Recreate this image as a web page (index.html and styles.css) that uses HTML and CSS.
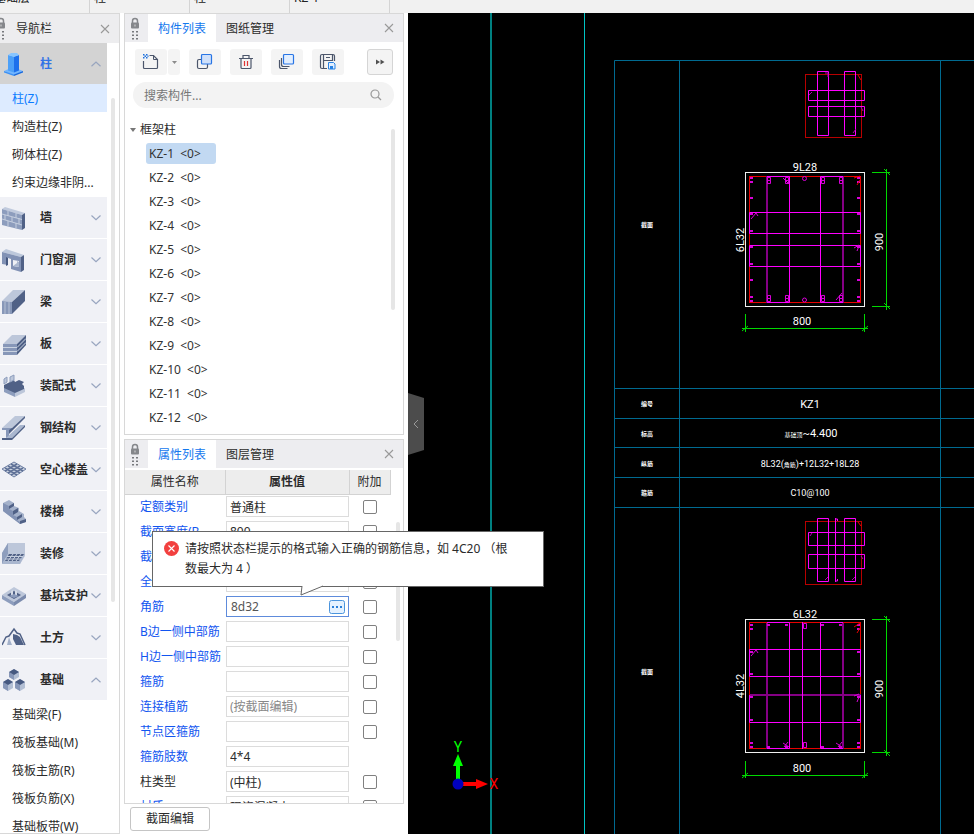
FILE: index.html
```html
<!DOCTYPE html>
<html lang="zh-CN">
<head>
<meta charset="utf-8">
<title>构件建模</title>
<link rel="stylesheet" href="styles.css">
</head>
<body>
<svg class="defs" aria-hidden="true">
  <symbol id="lock" viewBox="0 0 10 23">
    <path d="M2.5 6V4a2.5 2.5 0 0 1 5 0v2" fill="none" stroke="#85878b" stroke-width="1.5"/>
    <rect x="1" y="5.500" width="8" height="6" rx="1" fill="#85878b"/>
    <path d="M5 7.500v2" stroke="#d8d8da"/>
    <path d="M2 14h2v1.500h-2zM6 14h2v1.500h-2zM2 17.500h2v1.500h-2zM6 17.500h2v1.500h-2zM2 21h2v1.500h-2zM6 21h2v1.500h-2z" fill="#77797d"/>
  </symbol>
  <symbol id="close" viewBox="0 0 10 10"><path d="M1 1l8 8M9 1l-8 8" stroke="#999" stroke-width="1.100"/></symbol>
  <symbol id="down" viewBox="0 0 10 6"><path d="M.5 .5l4.500 4.200l4.500-4.200" fill="none" stroke="#98a5bf" stroke-width="1.200"/></symbol>
  <symbol id="up" viewBox="0 0 10 6"><path d="M.5 5.200l4.500-4.200l4.500 4.200" fill="none" stroke="#98a5bf" stroke-width="1.200"/></symbol>
</svg>

<div class="app">
  <div class="context-bar">
    <span>基础层</span><span>柱</span><span>柱</span><span>KZ-1</span>
  </div>

  <div class="workspace">
    <nav class="nav" aria-label="导航栏">
      <header class="nav-head">
        <svg class="lock"><use href="#lock"/></svg>
        <h2>导航栏</h2>
        <button class="close" aria-label="关闭导航栏"><svg><use href="#close"/></svg></button>
      </header>
      <div class="nav-body">
        <div class="nav-list">
          <section>
            <button class="group open">
              <svg class="ico" viewBox="0 0 24 24"><path d="M2 19l9-4 10 4-9 4z" fill="#72b6ff"/><path d="M2 19v1.500l10 3.500v-1.500z" fill="#3b91f5"/><path d="M21 19v1.500l-9 3.500v-1.500z" fill="#1769df"/><path d="M6 3l6 1.500v16l-6-2z" fill="#4ca0f8"/><path d="M12 4.500l5-1.500v15.500l-5 2z" fill="#1d70ec"/><path d="M6 3l3-2h6l2 2-5 2z" fill="#88c6ff"/></svg>
              <span>柱</span><svg class="arrow"><use href="#up"/></svg>
            </button>
            <a class="sub current" href="#">柱(Z)</a>
            <a class="sub" href="#">构造柱(Z)</a>
            <a class="sub" href="#">砌体柱(Z)</a>
            <a class="sub" href="#">约束边缘非阴...</a>
          </section>
          <section><button class="group">
            <svg class="ico" viewBox="0 0 24 24"><path d="M0 3l3-2 20 6-3 2z" fill="#c0cadd"/><path d="M0 3l20 6v15l-20-5z" fill="#8d9dbd"/><path d="M20 9l3-2v15l-3 2z" fill="#506186"/><path d="M0 8l20 5.500M0 13l20 6M6 5v5M14 7v5M3 9v5M10 11v5M17 12v6M6 15v5M14 17v5" stroke="#c6cfdf"/></svg>
            <span>墙</span><svg class="arrow"><use href="#down"/></svg></button></section>
          <section><button class="group">
            <svg class="ico" viewBox="0 0 24 24"><path d="M0 4l4-3 18 6-3 2z" fill="#bdc8db"/><path d="M0 4l19 5v15l-10-3v-10l-3-1v7l-6-1z" fill="#8292b5"/><path d="M19 9l3-2v15l-3 2z" fill="#506186"/><path d="M11 12l6 1v6l-6-1z" fill="#eef0f5"/><path d="M11 18l4-3v-2l2 1v5z" fill="#aab7cf"/><path d="M4 9v9l2-1v-7z" fill="#475980"/></svg>
            <span>门窗洞</span><svg class="arrow"><use href="#down"/></svg></button></section>
          <section><button class="group">
            <svg class="ico" viewBox="0 0 24 24"><path d="M0 11l11-11h12l-13 12z" fill="#bdc7da"/><path d="M0 11l10 1v12h-10z" fill="#8797b8"/><path d="M3 12v12M7 12v12" stroke="#b6c1d5"/><path d="M10 12l13-12v11l-13 13z" fill="#506186"/></svg>
            <span>梁</span><svg class="arrow"><use href="#down"/></svg></button></section>
          <section><button class="group">
            <svg class="ico" viewBox="0 0 24 24"><path d="M1 12l9-9h14l-9 9z" fill="#bdc7da"/><path d="M1 12h14v11h-14z" fill="#8797b8"/><path d="M15 12l9-9v10l-9 10z" fill="#4c5e84"/><path d="M1 15.500h14l9-9M1 19.500h14l9-9" fill="none" stroke="#cad3e1"/></svg>
            <span>板</span><svg class="arrow"><use href="#down"/></svg></button></section>
          <section><button class="group">
            <svg class="ico" viewBox="0 0 24 24"><path d="M2 13l11 5v5l-11-5z" fill="#8d9dbd"/><path d="M13 18l10-4v4l-10 5z" fill="#bdc7da"/><path d="M2 11l10-5 1 2 4-2 5 2-2 2 2 2v3l-9 4-11-5z" fill="#506186"/><path d="M2 5l3-2v5l-3 2zM8 3l4-2v5l-4 2z" fill="#bdc7da" stroke="#8d9dbd"/></svg>
            <span>装配式</span><svg class="arrow"><use href="#down"/></svg></button></section>
          <section><button class="group">
            <svg class="ico" viewBox="0 0 24 24"><path d="M0 12l13-12h10l-13 12z" fill="#bdc7da"/><path d="M0 12h10v2h-3v7l-3 1v-8h-4z" fill="#8797b8"/><path d="M10 12l13-12v2l-16 16v-4z" fill="#506186"/><path d="M0 22h4l14-13h5l-13 13z" fill="#aab7cf"/><path d="M0 22h10l13-13v2l-13 13h-10z" fill="#506186"/></svg>
            <span>钢结构</span><svg class="arrow"><use href="#down"/></svg></button></section>
          <section><button class="group">
            <svg class="ico" viewBox="0 0 24 24"><path d="M0 11l12-7 12 7-12 8z" fill="#cbd3e1" stroke="#6e7fa3"/><path d="M3 13l12-7M6 15l12-7M9 17l12-7M9 6l12 7M6 8l12 7M3 10l12 7" stroke="#5e7096" stroke-width="1.500"/></svg>
            <span>空心楼盖</span><svg class="arrow"><use href="#down"/></svg></button></section>
          <section><button class="group">
            <svg class="ico" viewBox="0 0 24 24"><path d="M1 3l6-3 5 3v3l5 2v3l5 3v3l2 2v3l-6 2-17-13z" fill="#a4b1ca"/><path d="M1 3l6 3v3l4 2v4l4 2v3l3 2v2l-17-13z" fill="#8292b4"/><path d="M7 6l5-3v3l-5 3zM11 11l5-3v4l-5 3zM15 17l5-3v3l-5 3zM18 21l6-2v3l-6 2z" fill="#506186"/></svg>
            <span>楼梯</span><svg class="arrow"><use href="#down"/></svg></button></section>
          <section><button class="group">
            <svg class="ico" viewBox="0 0 24 24"><path d="M6 1h17v13l-5 8h-18v-11z" fill="#bdc7da"/><path d="M6 1l-6 10v11l6-10z" fill="#8e9ebd"/><path d="M6 12h17l-5 10h-18z" fill="#aab7cf"/><path d="M7 12h15l-5 7h-14z" fill="#506186"/><path d="M5 14.500h16M3 17h16M11 12l-5 7M15 12l-5 7M19 12l-5 7" stroke="#c4cddd"/></svg>
            <span>装修</span><svg class="arrow"><use href="#down"/></svg></button></section>
          <section><button class="group">
            <svg class="ico" viewBox="0 0 24 24"><path d="M0 11l12-8 12 7-12 8z" fill="#bdc7da"/><path d="M0 11l12 7v4l-12-7z" fill="#8d9dbd"/><path d="M24 10v4l-12 8v-4z" fill="#7b8bad"/><path d="M5 11l7-4 7 4-7 4z" fill="#506186"/><path d="M9 7l2-1v6l-2-1zM13 6l2 1v5l-2-1z" fill="#d6dce7"/><path d="M7 12l5-2 5 2-5 2z" fill="#8d9dbd"/></svg>
            <span>基坑支护</span><svg class="arrow"><use href="#down"/></svg></button></section>
          <section><button class="group">
            <svg class="ico" viewBox="0 0 24 24"><path d="M0 19l4-8 3-1 5-7 3 4 3 1 5 11" fill="none" stroke="#506186" stroke-width="1.500"/><path d="M11 8l4 1 3 2 4 8h-8l-3-6z" fill="#506186"/><path d="M7 11l-2 8h5l-2-5z" fill="#a3b1ca"/></svg>
            <span>土方</span><svg class="arrow"><use href="#down"/></svg></button></section>
          <section>
            <button class="group">
              <svg class="ico" viewBox="0 0 24 24"><path d="M7 4l5-3 5 3v5l-5 3-5-3zM1 14l5-3 5 3v6l-5 3-5-3zM13 14l5-3 5 3v6l-5 3-5-3z" fill="#b3bfd4"/><path d="M7 4l5 3v5l-5-3zM1 14l5 3v6l-5-3zM13 14l5 3v6l-5-3z" fill="#8797b8"/><path d="M7 4l5-3 5 3-5 3zM1 14l5-3 5 3-5 3zM13 14l5-3 5 3-5 3z" fill="#465980"/></svg>
              <span>基础</span><svg class="arrow"><use href="#up"/></svg>
            </button>
            <a class="sub" href="#">基础梁(F)</a>
            <a class="sub" href="#">筏板基础(M)</a>
            <a class="sub" href="#">筏板主筋(R)</a>
            <a class="sub" href="#">筏板负筋(X)</a>
            <a class="sub" href="#">基础板带(W)</a>
          </section>
        </div>
        <div class="scroll nav-scroll"></div>
      </div>
    </nav>

    <div class="side">
      <section class="panel components">
        <header class="tabs">
          <svg class="lock"><use href="#lock"/></svg>
          <button class="tab active">构件列表</button>
          <button class="tab">图纸管理</button>
          <button class="close" aria-label="关闭构件列表"><svg><use href="#close"/></svg></button>
        </header>
        <div class="tools">
          <div class="split">
            <button class="tool" aria-label="新建"><svg viewBox="0 0 18 18"><path d="M1.500 8v6.500q0 1 1 1h12q1 0 1-1v-8l-4-4h-4" fill="none" stroke="#4c566b" stroke-width="1.200"/><path d="M11.500 2.500v4h4" fill="none" stroke="#4c566b"/><path d="M1 1h1.500v1.500h-1.500zM4 1h1.500v1.500h-1.500zM2.500 2.500h1.500v1.500h-1.500zM5.500 2.500h1v1.500h-1zM1 4h1.500v1.500h-1.500zM4 4h1.500v1.500h-1.500z" fill="#1d70dd"/></svg></button>
            <button class="drop" aria-label="新建选项"><svg viewBox="0 0 5 3"><path d="M0 0h5l-2.500 3z" fill="#8b8b8b"/></svg></button>
          </div>
          <button class="tool" aria-label="复制"><svg viewBox="0 0 18 18"><rect x="1.500" y="6.500" width="10" height="9" rx="1.500" fill="none" stroke="#4c566b" stroke-width="1.200"/><rect x="5.500" y="1.500" width="10" height="9.500" rx="1" fill="#cfe0fa" stroke="#2875e5" stroke-width="1.200"/></svg></button>
          <button class="tool" aria-label="删除"><svg viewBox="0 0 18 18"><path d="M2 5.500h14M6 5v-2.500h6v2.500M4 5.500v9q0 1 1 1h8q1 0 1-1v-9" fill="none" stroke="#4c566b" stroke-width="1.200"/><path d="M7.500 8v5M10.500 8v5" stroke="#e03434" stroke-width="1.200"/></svg></button>
          <button class="tool" aria-label="层间复制"><svg viewBox="0 0 18 18"><path d="M1.500 7v6.500q0 2 2 2h6M3.500 5v6.500q0 2 2 2h6" fill="none" stroke="#4c566b" stroke-width="1.200"/><rect x="5.500" y="1.500" width="10" height="9.500" rx="1" fill="#e2efff" stroke="#2875e5" stroke-width="1.200"/></svg></button>
          <button class="tool" aria-label="存档"><svg viewBox="0 0 18 18"><path d="M8 15.500h-5q-1.500 0-1.500-1.500v-11q0-1.500 1.500-1.500h11q1.500 0 1.500 1.500v5M4.500 2v13M13.500 2v5.500h-9M7 4.500h4" fill="none" stroke="#4c566b" stroke-width="1.200"/><path d="M9.500 9.500h5l1.500 1.500v5h-6.500z" fill="#e2efff" stroke="#2883e5"/><path d="M11 13h3v3h-3z" fill="#2883e5"/></svg></button>
          <button class="tool more" aria-label="更多"><svg viewBox="0 0 18 18"><path d="M5 6.500l4 2.500-4 2.500zM9.500 6.500l4 2.500-4 2.500z" fill="#505050"/></svg></button>
        </div>
        <label class="search">
          <input type="search" placeholder="搜索构件..." aria-label="搜索构件">
          <svg viewBox="0 0 12 12"><circle cx="5" cy="5" r="4" fill="none" stroke="#999" stroke-width="1.200"/><path d="M8 8l3 3" stroke="#999" stroke-width="1.200"/></svg>
        </label>
        <div class="tree">
          <div class="tree-list">
            <div class="root"><svg viewBox="0 0 6 4"><path d="M0 0h6l-3 4z" fill="#777"/></svg>框架柱</div>
            <ul>
              <li><button class="leaf chosen">KZ-1&nbsp; &lt;0&gt;</button></li>
              <li><button class="leaf">KZ-2&nbsp; &lt;0&gt;</button></li>
              <li><button class="leaf">KZ-3&nbsp; &lt;0&gt;</button></li>
              <li><button class="leaf">KZ-4&nbsp; &lt;0&gt;</button></li>
              <li><button class="leaf">KZ-5&nbsp; &lt;0&gt;</button></li>
              <li><button class="leaf">KZ-6&nbsp; &lt;0&gt;</button></li>
              <li><button class="leaf">KZ-7&nbsp; &lt;0&gt;</button></li>
              <li><button class="leaf">KZ-8&nbsp; &lt;0&gt;</button></li>
              <li><button class="leaf">KZ-9&nbsp; &lt;0&gt;</button></li>
              <li><button class="leaf">KZ-10&nbsp; &lt;0&gt;</button></li>
              <li><button class="leaf">KZ-11&nbsp; &lt;0&gt;</button></li>
              <li><button class="leaf">KZ-12&nbsp; &lt;0&gt;</button></li>
            </ul>
          </div>
          <div class="scroll tree-scroll"></div>
        </div>
      </section>

      <section class="panel props">
        <header class="tabs">
          <svg class="lock"><use href="#lock"/></svg>
          <button class="tab active">属性列表</button>
          <button class="tab">图层管理</button>
          <button class="close" aria-label="关闭属性列表"><svg><use href="#close"/></svg></button>
        </header>
        <div class="props-body">
          <table>
            <colgroup><col class="c-name"><col class="c-value"><col class="c-extra"></colgroup>
            <thead><tr><th>属性名称</th><th class="strong">属性值</th><th>附加</th></tr></thead>
            <tbody>
              <tr><td><label for="p1">定额类别</label></td><td><input id="p1" value="普通柱"></td><td><input type="checkbox" aria-label="附加 定额类别"></td></tr>
              <tr><td><label for="p2">截面宽度(B...</label></td><td><input id="p2" value="800"></td><td><input type="checkbox" aria-label="附加 截面宽度"></td></tr>
              <tr><td><label for="p3">截面高度(H...</label></td><td><input id="p3" value="900"></td><td><input type="checkbox" aria-label="附加 截面高度"></td></tr>
              <tr><td><label for="p4">全部纵筋</label></td><td><input id="p4"></td><td><input type="checkbox" aria-label="附加 全部纵筋"></td></tr>
              <tr><td><label for="p5">角筋</label></td><td><div class="editing"><input id="p5" value="8d32"><button aria-label="选择角筋"><svg viewBox="0 0 16 14"><rect x=".5" y=".5" width="15" height="13" rx="2" fill="#e4f1ff" stroke="#4a94dd"/><path d="M3 6h2v2h-2zM7 6h2v2h-2zM11 6h2v2h-2z" fill="#287ed8"/></svg></button></div></td><td><input type="checkbox" aria-label="附加 角筋"></td></tr>
              <tr><td><label for="p6">B边一侧中部筋</label></td><td><input id="p6"></td><td><input type="checkbox" aria-label="附加 B边一侧中部筋"></td></tr>
              <tr><td><label for="p7">H边一侧中部筋</label></td><td><input id="p7"></td><td><input type="checkbox" aria-label="附加 H边一侧中部筋"></td></tr>
              <tr><td><label for="p8">箍筋</label></td><td><input id="p8"></td><td><input type="checkbox" aria-label="附加 箍筋"></td></tr>
              <tr><td><label for="p9">连接植筋</label></td><td><input id="p9" placeholder="(按截面编辑)"></td><td><input type="checkbox" aria-label="附加 连接植筋"></td></tr>
              <tr><td><label for="p10">节点区箍筋</label></td><td><input id="p10"></td><td><input type="checkbox" aria-label="附加 节点区箍筋"></td></tr>
              <tr><td><label for="p11">箍筋肢数</label></td><td><input id="p11" value="4*4"></td><td></td></tr>
              <tr><td><label class="plain" for="p12">柱类型</label></td><td><input id="p12" value="(中柱)"></td><td><input type="checkbox" aria-label="附加 柱类型"></td></tr>
              <tr><td><label for="p13">材质</label></td><td><input id="p13" value="现浇混凝土"></td><td><input type="checkbox" aria-label="附加 材质"></td></tr>
            </tbody>
          </table>
          <div class="scroll props-scroll"></div>
        </div>
        <div class="tip" role="alert">
          <svg class="tip-icon" viewBox="0 0 15 15"><circle cx="7.500" cy="7.500" r="7.500" fill="#f2403f"/><path d="M4.500 4.500l6 6M10.500 4.500l-6 6" stroke="#fff" stroke-width="1.100"/></svg>
          <p>请按照状态栏提示的格式输入正确的钢筋信息，如 4C20 （根<br>数最大为 4 ）</p>
          <svg class="tip-tail" viewBox="0 0 24 11"><path d="M2 0v1.500l-1 8.500 21-8.500V0z" fill="#fff"/><path d="M2 1l-1 9 22-9" fill="none" stroke="#666"/></svg>
        </div>
      </section>

      <button class="section-edit">截面编辑</button>
    </div>

    <main class="canvas">
      <svg class="drawing" role="img" aria-label="柱配筋图">
        <g transform="translate(-408 -13)" fill="none">
          <path class="axis-wide" d="M491 0V2000"/>
          <path class="axis" d="M584.500 0V2000"/>
          <path class="grid" d="M614.500 2000V60.500H3000M679.500 60V2000M940.500 60V2000M614 388.500H3000M614 418.500H3000M614 447.500H3000M614 477.500H3000M614 507.500H3000"/>

          <!-- upper stirrup diagram -->
          <rect class="red dim" x="805.500" y="74.500" width="56" height="63"/>
          <path class="mag" d="M817.500 71.500h11v64h-11zM844.500 71.500h11v64h-11zM808.500 90.500h56v10h-56zM808.500 106.500h56v10h-56z"/>
          <path class="mag dim" d="M825 73h3v4M809 95l3-3M861 107l2 4M853 133l3-4"/>
          <path class="red" d="M858 75l3 5"/>

          <!-- upper column section -->
          <rect class="white" x="745.500" y="172.500" width="119" height="134"/>
          <rect class="red" x="749.500" y="176.500" width="111" height="126"/>
          <path class="mag thick" d="M767 176V303M843 176V303"/>
          <path class="mag" d="M767 176.500h22.500v126h-22.500M843 176.500h-22.500v126h22.500M749.500 212.500h111v21h-111zM749.500 245.500h111v21h-111z"/>
          <g class="mag bars">
            <path d="M767.500 177.500h3v3h-3zM767.500 180.500h3v3h-3zM785.500 177.500h3v3h-3zM785.500 180.500h3v3h-3zM821.500 177.500h3v3h-3zM821.500 180.500h3v3h-3zM839.500 177.500h3v3h-3zM839.500 180.500h3v3h-3z"/>
            <path d="M767.500 295.500h3v3h-3zM767.500 298.500h3v3h-3zM785.500 295.500h3v3h-3zM785.500 298.500h3v3h-3zM821.500 295.500h3v3h-3zM821.500 298.500h3v3h-3zM839.500 295.500h3v3h-3zM839.500 298.500h3v3h-3z"/>
            <circle cx="804.500" cy="178.500" r="2"/><circle cx="804.500" cy="300" r="2"/>
            <path d="M750 178h3M750 182h3M750 198h3M750 214h3M750 231h3M750 247h3M750 264h3M750 280h3M750 297h3M750 301h3M857 178h3M857 182h3M857 198h3M857 214h3M857 231h3M857 247h3M857 264h3M857 280h3M857 297h3M857 301h3" stroke-width="2"/>
            <path d="M751 219l5-6 2 3M854 248l5-3M857 251l2-5M836 300l6-7M783 178l6 6"/>
          </g>
          <path class="red" d="M854 178l6-2M857 185l3-5"/>

          <!-- upper dimensions -->
          <path class="green" d="M742 328.500H868M745.500 314V332M864.500 314V332M742 331l6-5M862 331l6-5M886.500 169V310M872 172.500h18M872 306.500h18M884 169l6 6M884 303l6 6"/>

          <!-- lower stirrup diagram -->
          <rect class="red dim" x="805.500" y="521.500" width="56" height="63"/>
          <path class="mag" d="M817.500 518.500h11v63h-11zM844.500 518.500h11v63h-11zM835.500 518v64M835.500 519h2v2M835.500 581h2v-2M808.500 532.500h56v13h-56zM808.500 554.500h56v14h-56z"/>
          <path class="mag dim" d="M810 536l2-3M861 556l2 3M825 580l3-3M852 580l3-3"/>
          <path class="red" d="M858 522l3 4"/>

          <!-- lower column section -->
          <rect class="white" x="745.500" y="619.500" width="119" height="133"/>
          <rect class="red" x="749.500" y="622.500" width="111" height="126"/>
          <path class="mag thick" d="M767 623V749M843 623V749M750 695H861"/>
          <path class="mag" d="M767 622.500h22.500v126h-22.500M843 622.500h-22.500v126h22.500M802.500 622V749M749.500 649.500h111v27h-111zM749.500 695v27.500h111V695"/>
          <g class="mag bars">
            <path d="M750 625h3M750 629h3M750 652h3M750 674h3M750 697h3M750 720h3M750 743h3M750 747h3M857 625h3M857 629h3M857 652h3M857 674h3M857 697h3M857 720h3M857 743h3M857 747h3M767 625h3M785 625h3M821 625h3M839 625h3M767 747h3M785 747h3M821 747h3M839 747h3" stroke-width="2"/>
            <path d="M803.500 623.500h3v5h-3zM803.500 742.500h3v5h-3zM751 656l5-6 2 3M854 696l5-2M857 702l2-5M783 743l6 4M836 743l6 4M784 747l4-5M838 747l4-5"/>
          </g>
          <path class="red" d="M854 627l6-4M857 633l3-5"/>

          <!-- lower dimensions -->
          <path class="green" d="M742 775.500H868M745.500 761V778M864.500 761V778M742 778l6-5M862 778l6-5M886.500 616V756M872 619.500h18M872 752.500h18M884 616l6 6M884 750l6 6"/>

          <g class="cad">
            <text x="805" y="171">9L28</text>
            <text x="802" y="325">800</text>
            <text transform="translate(744 240) rotate(-90)">6L32</text>
            <text transform="translate(883 242) rotate(-90)">900</text>
            <text x="805" y="618">6L32</text>
            <text x="802" y="772">800</text>
            <text transform="translate(744 686) rotate(-90)">4L32</text>
            <text transform="translate(883 689) rotate(-90)">900</text>
            <text x="810" y="408">KZ1</text>
            <text x="811" y="437"><tspan class="han">基础顶</tspan>~4.400</text>
            <text class="long" x="810" y="467">8L32(<tspan class="han">角筋</tspan>)+12L32+18L28</text>
            <text class="long" x="810" y="496">C10@100</text>
          </g>
          <g class="cad row-name">
            <text x="647" y="227">截面</text>
            <text x="647" y="406">编号</text>
            <text x="647" y="436">标高</text>
            <text x="647" y="466">纵筋</text>
            <text x="647" y="495">箍筋</text>
            <text x="647" y="674">截面</text>
          </g>

          <!-- coordinate axes -->
          <path d="M458 784V765" stroke="#0f0" stroke-width="4"/><path d="M453 766h10l-5-12z" fill="#0f0"/>
          <path d="M458 784h18" stroke="#f00" stroke-width="4"/><path d="M476 779v10l12-5z" fill="#f00"/>
          <circle cx="458" cy="784" r="5.500" fill="#0000be"/>
          <g class="axis-name"><text x="458" y="752" fill="#0f0">Y</text><text x="494" y="789" fill="#f00">X</text></g>
        </g>
      </svg>
      <button class="handle" aria-label="收起面板"><svg viewBox="0 0 6 10"><path d="M5 1l-4 4 4 4" fill="none" stroke="#999"/></svg></button>
    </main>
  </div>
</div>
</body>
</html>
```
FILE: styles.css
```css
* { box-sizing: border-box; }

body {
  margin: 0;
  font: 12px/16px "Noto Sans", "Noto Sans CJK SC", sans-serif;
  color: #2b2b2b;
  background: #fff;
}

button, input { font: inherit; color: inherit; }
button { margin: 0; padding: 0; border: 0; background: none; }
a { color: inherit; text-decoration: none; }
svg { display: block; flex: none; }
h2, p, ul { margin: 0; padding: 0; }
h2 { font-size: 12px; font-weight: 400; }
ul { list-style: none; }
.defs { position: absolute; width: 0; height: 0; }

.app { display: flex; flex-direction: column; height: 100vh; overflow: hidden; padding-bottom: 1px; }

.context-bar { display: flex; flex: none; height: 13px; margin-left: -10px; overflow: hidden; background: #f1f1f1; }
.context-bar span {
  display: flex;
  align-items: flex-end;
  width: 100px;
  padding: 0 0 7px 4px;
  border-right: 1px solid #d4d4d4;
  color: #222;
}

.workspace { display: flex; flex: 1; min-height: 0; }

/* navigation */
.nav {
  display: flex;
  flex-direction: column;
  flex: none;
  width: 120px;
  border: 1px solid #d8d8d8;
  border-left: 0;
}
.nav-head { display: flex; align-items: center; flex: none; height: 29px; background: #ededef; }
.nav-head .lock { margin-left: -4px; }
.nav-head h2 { margin-left: 10px; }
.lock { width: 10px; height: 23px; }
.close { margin-left: auto; padding: 8px; }
.nav-head .close { padding: 9px; }
.close svg { width: 10px; height: 10px; }
.nav-body { display: flex; flex: 1; min-height: 0; }
.nav-list { display: flex; flex-direction: column; gap: 1px; width: 107px; overflow: hidden; }
.nav-list section { flex: none; }
.group {
  display: flex;
  align-items: center;
  width: 100%;
  height: 41px;
  padding: 0 6px 0 2px;
  background: #f0f1f6;
  font-weight: 700;
}
.group span { margin-left: 14px; white-space: nowrap; }
.group.open { background: #d3d3d3; color: #3273e6; }
.ico { width: 24px; height: 24px; }
.arrow { width: 10px; height: 6px; margin-left: auto; }
.sub { display: block; height: 28px; padding: 2px 0 0 12px; line-height: 26px; white-space: nowrap; }
.sub.current { background: #ddebff; color: #0a7bff; }
.scroll { flex: none; border-radius: 2px; background: #e6e6e6; }
.nav-scroll { width: 4px; height: 504px; margin: 55px 0 0 4px; }

/* side panels */
.side { display: flex; flex-direction: column; flex: none; width: 288px; padding: 0 4px 3px 4px; }
.panel { display: flex; flex-direction: column; width: 280px; border: 1px solid #d8d8d8; }
.components { flex: none; }
.tabs { display: flex; flex: none; height: 28px; background: #ededf0; }
.tabs .lock { margin: 3px 8px 0 5px; }
.tab { width: 68px; padding-top: 2px; }
.tab.active { background: #fff; color: #1478ee; }
.tabs .close { padding: 9px; }

.tools { display: flex; gap: 9px; padding: 7px 10px; }
.split { display: flex; gap: 1px; }
.tool, .drop { display: flex; align-items: center; justify-content: center; height: 26px; border-radius: 3px; background: #f4f4f4; }
.tool { width: 32px; }
.drop { width: 12px; }
.tool svg { width: 18px; height: 18px; }
.drop svg { width: 5px; height: 3px; }
.more { width: 26px; margin-left: auto; border: 1px solid #d5d5d5; }

.search { display: flex; align-items: center; height: 26px; margin: 0 9px 0 8px; padding: 0 12px 0 11px; border-radius: 13px; background: #f3f3f3; }
.search input { flex: 1; min-width: 0; padding: 2px 0 0; border: 0; outline: 0; background: none; appearance: none; }
.search input::placeholder { color: #777; }
.search svg { width: 12px; height: 12px; }

.tree { display: flex; justify-content: space-between; padding: 9px 8px 5px 5px; }
.root { display: flex; align-items: center; gap: 4px; height: 24px; padding-top: 2px; }
.root svg { width: 6px; height: 4px; }
.tree li { height: 24px; padding: 2px 0 0 16px; }
.leaf { display: block; min-width: 70px; height: 21px; padding: 0 3px; border-radius: 3px; text-align: left; color: #333; }
.leaf.chosen { background: #c2d9f2; }
.tree-scroll { width: 4px; height: 181px; margin-top: 12px; }

.props { position: relative; flex: 1; min-height: 0; margin-top: 4px; }
.props-body { display: flex; flex: 1; min-height: 0; padding-top: 2px; overflow: hidden; }
.props table { flex: none; width: 265px; border-collapse: collapse; table-layout: fixed; align-self: flex-start; }
.c-name { width: 100px; }
.c-value { width: 124px; }
.c-extra { width: 41px; }
.props th { height: 24px; padding: 0; border-right: 1px solid #d3d3d3; border-bottom: 1px solid #d3d3d3; background: #ededed; font-weight: 400; }
.props th.strong { font-weight: 700; }
.props td { height: 25px; padding: 0; }
.props td:first-child { padding-left: 15px; white-space: nowrap; }
.props td:nth-child(2) { padding-left: 1px; }
.props td:last-child { text-align: center; }
.props label { color: #1155f0; }
.props label.plain { color: inherit; }
.props td > input:not([type]) { display: block; width: 123px; height: 21px; padding: 0 3px; border: 1px solid #dcdcdc; background: #fff; outline: 0; }
.props input::placeholder { color: #888; }
.editing { display: flex; align-items: center; width: 123px; height: 21px; padding: 0 3px 0 4px; border: 1px solid #5e8bdb; background: #fff; }
.editing input { flex: 1; min-width: 0; padding: 0; border: 0; outline: 0; color: #555; }
.editing svg { width: 16px; height: 14px; }
.props input[type="checkbox"] { display: block; appearance: none; width: 14px; height: 14px; margin: 0 auto; border: 1px solid #808080; border-radius: 2px; background: #fff; }
.props-scroll { width: 4px; height: 119px; margin: 52px 0 0 5px; }

.tip { position: absolute; top: 91px; left: 27px; z-index: 2; display: flex; gap: 6px; width: 392px; padding: 7px 12px 7px 11px; border: 1px solid #666; background: #fff; line-height: 20px; }
.tip p { white-space: nowrap; }
.tip-icon { width: 15px; height: 15px; margin-top: 2px; }
.tip-tail { position: absolute; top: 100%; left: 147px; width: 24px; height: 11px; margin-top: -1px; }

.section-edit { flex: none; width: 80px; height: 24px; margin: 3px 0 0 6px; border: 1px solid #c5c5c5; border-radius: 3px; background: #fff; }

/* drawing area */
.canvas { position: relative; flex: 1; min-width: 0; overflow: hidden; background: #000; }
.drawing { width: 100%; height: 100%; }
.axis-wide { stroke: #008080; stroke-width: 2; }
.axis { stroke: #00c4c4; }
.grid { stroke: #006a90; }
.white { stroke: #f0f0f0; }
.red { stroke: #e80000; }
.mag { stroke: #f0f; }
.thick { stroke: #850085; stroke-width: 2; }
.red.dim { stroke: #b80000; }
.mag.dim { stroke: #b000b0; }
.bars { stroke: #d800d8; }
.green { stroke: #00d800; }
.cad { fill: #fff; font: 11px Roboto, "Noto Sans CJK SC", sans-serif; text-anchor: middle; }
.cad .long { font-size: 9px; }
.cad .han { font-size: 6px; }
.row-name { font-size: 6px; font-weight: 700; }
.axis-name { font: 14px Roboto, sans-serif; text-anchor: middle; }
.handle { position: absolute; top: 380px; left: 0; display: flex; align-items: center; justify-content: center; width: 16px; height: 62px; background: #4c4c4c; clip-path: polygon(0 0, 100% 5px, 100% 57px, 0 100%); }
.handle svg { width: 6px; height: 10px; }
```
